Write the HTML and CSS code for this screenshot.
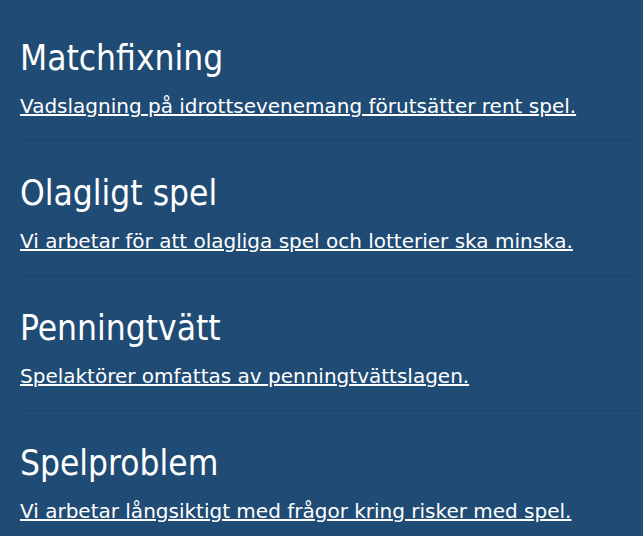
FILE: index.html
```html
<!DOCTYPE html>
<html lang="sv">
<head>
    <meta charset="UTF-8">
    <meta name="viewport" content="width=device-width, initial-scale=1.0">
    <title>Spelmarknaden</title>
    <link rel="stylesheet" href="styles.css">
</head>
<body>
    <div class="topics">
        <div class="topic">
            <h2>Matchfixning</h2>
            <a href="#">Vadslagning på idrottsevenemang förutsätter rent spel.</a>
        </div>
        <div class="topic">
            <h2>Olagligt spel</h2>
            <a href="#">Vi arbetar för att olagliga spel och lotterier ska minska.</a>
        </div>
        <div class="topic">
            <h2>Penningtvätt</h2>
            <a href="#">Spelaktörer omfattas av penningtvättslagen.</a>
        </div>
        <div class="topic">
            <h2>Spelproblem</h2>
            <a href="#">Vi arbetar långsiktigt med frågor kring risker med spel.</a>
        </div>
    </div>
</body>
</html>
```

FILE: styles.css
```css
*{
    margin: 0;
    padding: 0;
    box-sizing: border-box;
}
body{
    background-color: #1f4b74;
    font-family: "DejaVu Sans", sans-serif;
    color: #ffffff;
}
.topics{
    padding: 6px 4px 0 20px;
}
.topic{
    padding: 31px 0 22px;
    border-bottom: 1px solid #1b4469;
}
.topic h2{
    font-family: "DejaVu Sans Condensed", "DejaVu Sans", sans-serif;
    font-stretch: condensed;
    font-weight: normal;
    font-size: 35px;
    line-height: 42px;
    margin-bottom: 15px;
}
.topic a{
    display: inline-block;
    color: #ffffff;
    font-size: 20px;
    line-height: 24px;
    text-decoration: underline;
    text-decoration-thickness: 2px;
}
```
